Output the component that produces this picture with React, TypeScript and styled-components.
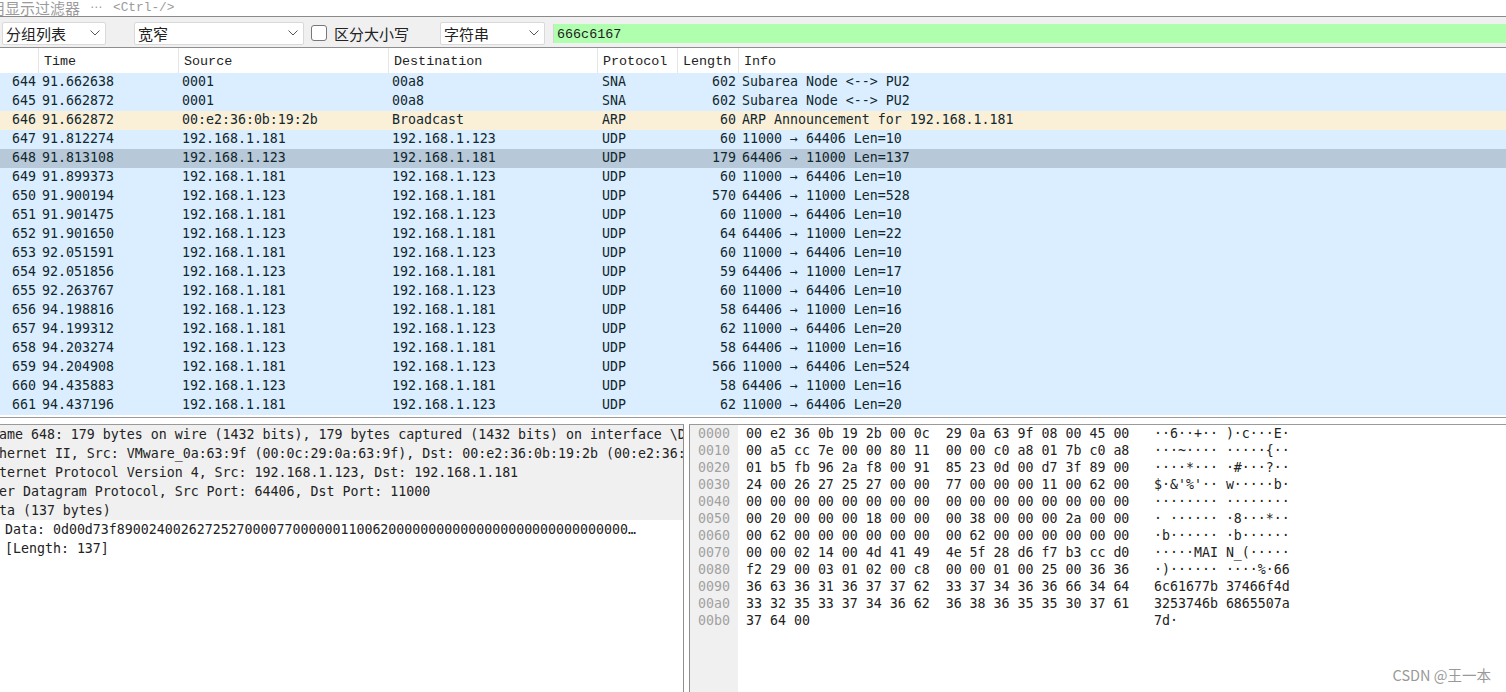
import React from "react";
import styled, { createGlobalStyle } from "styled-components";

const Global = createGlobalStyle`
  html, body { margin: 0; padding: 0; background: #fff; overflow: hidden; }
  * { box-sizing: border-box; }
`;
const CJK = `"Noto Sans CJK SC", "Noto Sans", sans-serif`;
const MONO = `"DejaVu Sans Mono", monospace`;

const Page = styled.div`
  width: 1506px; height: 692px; overflow: hidden; display: flex; flex-direction: column; background: #fff;
`;
const FilterBar = styled.div`
  height: 17px; flex: none; overflow: hidden; border-bottom: 1px solid #8a8a8a; white-space: nowrap;
  color: #9b9b9b; font: 15px/15px ${CJK};
`;
const FilterText = styled.div`
  display: flex; align-items: center; gap: 8px; margin: -1px 0 0 -25px; height: 16px;
`;
const Dots = styled.span`font: 12px "DejaVu Sans", sans-serif; margin-left: 2px;`;
const Hint = styled.span`font: 12.8px "Liberation Mono", monospace; color: #9b9b9b; margin-left: 3px;`;
const Toolbar = styled.div`
  height: 31px; flex: none; background: #f0f0f0; border-bottom: 1px solid #8e8e8e;
  display: flex; align-items: center; padding: 2px 0 0 2px;
`;
const Select = styled.div<{ $w: number; $ml: number }>`
  width: ${p => p.$w}px; margin-left: ${p => p.$ml}px; height: 23px; flex: none; background: #fff;
  border: 1px solid #d9d9d9; border-radius: 2px; display: flex; align-items: center; justify-content: space-between;
  padding: 0 5px 0 3px; font: 15px ${CJK}; color: #222;
`;
const Check = styled.span`
  width: 16px; height: 16px; margin-left: 7px; flex: none; border: 1px solid #777; border-radius: 3px; background: #fff;
`;
const CheckLabel = styled.span`margin-left: 7px; width: 94px; flex: none; font: 15px ${CJK}; color: #222;`;
const Search = styled.div`
  margin-left: 8px; flex: 1; height: 19px; background: #afffaf; display: flex; align-items: center; padding: 2px 0 0 3px;
  font: 13.4px "Liberation Mono", monospace; color: #222; border-left: 1px solid #d5d5d5;
`;
const Chevron = () => (
  <svg width="10" height="6" viewBox="0 0 10 6" fill="none" stroke="#555" strokeWidth="1"><path d="M.5.5 5 5 9.5.5" /></svg>
);
const ListHead = styled.div`
  height: 25px; flex: none; display: flex; background: #fff;
`;
const HeadCell = styled.div<{ $w: number; $last?: boolean }>`
  ${p => p.$last ? "flex: 1;" : `width: ${p.$w}px; flex: none; border-right: 1px solid #e6e6e6;`}
  padding: 1px 0 0 5px; display: flex; align-items: center;
  font: 13.4px "Liberation Mono", monospace; color: #222;
`;
const List = styled.div`flex: none; display: flex; flex-direction: column; border-bottom: 1px solid #9a9a9a; padding-bottom: 2px;`;
const Row = styled.div<{ $bg: string }>`
  height: 19px; display: flex; background: ${p => p.$bg};
  font: 13.27px/18px ${MONO}; color: #12272e; white-space: pre;
`;
const Cell = styled.span<{ $w: number; $right?: boolean; $pl?: number }>`
  width: ${p => p.$w}px; flex: none; padding-left: ${p => p.$pl ?? 0}px; overflow: hidden;
  ${p => p.$right ? "text-align: right;" : ""}
`;
const Panes = styled.div`flex: 1; min-height: 0; display: flex; padding-top: 6px; background: #fff;`;
const Tree = styled.div`
  width: 684px; flex: none; border-right: 1px solid #8f8f8f; border-top: 1px solid #9a9a9a; overflow: hidden;
  font: 13.27px/19px ${MONO}; color: #222; white-space: pre;
`;
const TreeRow = styled.div<{ $muted?: boolean }>`
  height: 19px; background: ${p => p.$muted ? "#f0f0f0" : "#fff"};
  padding-left: ${p => p.$muted ? 0 : 5}px;
  text-indent: ${p => p.$muted ? -17 : 0}px;
`;
const Splitter = styled.div`width: 5px; flex: none;`;
const Hex = styled.div`
  flex: 1; display: flex; position: relative; border-left: 1px solid #8f8f8f; border-top: 1px solid #9a9a9a; overflow: hidden;
  font: 13.27px/17px ${MONO}; color: #222; white-space: pre;
`;
const Offsets = styled.div`width: 48px; flex: none; background: #f0f0f0; color: #a0a0a0; padding-left: 8px;`;
const HexBytes = styled.div`width: 416px; flex: none; padding-left: 8px;`;
const Ascii = styled.div`flex: 1;`;
const Watermark = styled.div`
  position: absolute; right: 15px; bottom: 7px; color: #999; font: 14.5px ${CJK};
`;

const UDP = "#daeeff";
const rows: [string, string, string, string, string, string, string, string][] = [
  ["644","91.662638","0001","00a8","SNA","602","Subarea Node <--> PU2",UDP],
  ["645","91.662872","0001","00a8","SNA","602","Subarea Node <--> PU2",UDP],
  ["646","91.662872","00:e2:36:0b:19:2b","Broadcast","ARP","60","ARP Announcement for 192.168.1.181","#faf0d7"],
  ["647","91.812274","192.168.1.181","192.168.1.123","UDP","60","11000 → 64406 Len=10",UDP],
  ["648","91.813108","192.168.1.123","192.168.1.181","UDP","179","64406 → 11000 Len=137","#b7c9d8"],
  ["649","91.899373","192.168.1.181","192.168.1.123","UDP","60","11000 → 64406 Len=10",UDP],
  ["650","91.900194","192.168.1.123","192.168.1.181","UDP","570","64406 → 11000 Len=528",UDP],
  ["651","91.901475","192.168.1.181","192.168.1.123","UDP","60","11000 → 64406 Len=10",UDP],
  ["652","91.901650","192.168.1.123","192.168.1.181","UDP","64","64406 → 11000 Len=22",UDP],
  ["653","92.051591","192.168.1.181","192.168.1.123","UDP","60","11000 → 64406 Len=10",UDP],
  ["654","92.051856","192.168.1.123","192.168.1.181","UDP","59","64406 → 11000 Len=17",UDP],
  ["655","92.263767","192.168.1.181","192.168.1.123","UDP","60","11000 → 64406 Len=10",UDP],
  ["656","94.198816","192.168.1.123","192.168.1.181","UDP","58","64406 → 11000 Len=16",UDP],
  ["657","94.199312","192.168.1.181","192.168.1.123","UDP","62","11000 → 64406 Len=20",UDP],
  ["658","94.203274","192.168.1.123","192.168.1.181","UDP","58","64406 → 11000 Len=16",UDP],
  ["659","94.204908","192.168.1.181","192.168.1.123","UDP","566","11000 → 64406 Len=524",UDP],
  ["660","94.435883","192.168.1.123","192.168.1.181","UDP","58","64406 → 11000 Len=16",UDP],
  ["661","94.437196","192.168.1.181","192.168.1.123","UDP","62","11000 → 64406 Len=20",UDP],
];
const heads: [string, number][] = [["",39],["Time",140],["Source",210],["Destination",209],["Protocol",80],["Length",61],["Info",0]];
const tree: [string, boolean][] = [
  ["Frame 648: 179 bytes on wire (1432 bits), 179 bytes captured (1432 bits) on interface \\Device\\NPF", true],
  ["Ethernet II, Src: VMware_0a:63:9f (00:0c:29:0a:63:9f), Dst: 00:e2:36:0b:19:2b (00:e2:36:0b:19:2b)", true],
  ["Internet Protocol Version 4, Src: 192.168.1.123, Dst: 192.168.1.181", true],
  ["User Datagram Protocol, Src Port: 64406, Dst Port: 11000", true],
  ["Data (137 bytes)", true],
  ["Data: 0d00d73f8900240026272527000077000000110062000000000000000000000000000000…", false],
  ["[Length: 137]", false],
];
const offs = ["0000","0010","0020","0030","0040","0050","0060","0070","0080","0090","00a0","00b0"];
const hexL = [
"00 e2 36 0b 19 2b 00 0c  29 0a 63 9f 08 00 45 00","00 a5 cc 7e 00 00 80 11  00 00 c0 a8 01 7b c0 a8",
"01 b5 fb 96 2a f8 00 91  85 23 0d 00 d7 3f 89 00","24 00 26 27 25 27 00 00  77 00 00 00 11 00 62 00",
"00 00 00 00 00 00 00 00  00 00 00 00 00 00 00 00","00 20 00 00 00 18 00 00  00 38 00 00 00 2a 00 00",
"00 62 00 00 00 00 00 00  00 62 00 00 00 00 00 00","00 00 02 14 00 4d 41 49  4e 5f 28 d6 f7 b3 cc d0",
"f2 29 00 03 01 02 00 c8  00 00 01 00 25 00 36 36","36 63 36 31 36 37 37 62  33 37 34 36 36 66 34 64",
"33 32 35 33 37 34 36 62  36 38 36 35 35 30 37 61","37 64 00"];
const asc = [
"··6··+·· )·c···E·","···~···· ·····{··","····*··· ·#···?··","$·&'%'·· w·····b·",
"········ ········","· ······ ·8···*··","·b······ ·b······","·····MAI N_(·····",
"·)······ ····%·66","6c61677b 37466f4d","3253746b 6865507a","7d·"];

export default function App() {
  return (
    <Page>
      <Global />
      <FilterBar>
        <FilterText>应用显示过滤器<Dots>⋯</Dots><Hint>&lt;Ctrl-/&gt;</Hint></FilterText>
      </FilterBar>
      <Toolbar>
        <Select $w={104} $ml={0}>分组列表<Chevron /></Select>
        <Select $w={170} $ml={28}>宽窄<Chevron /></Select>
        <Check />
        <CheckLabel>区分大小写</CheckLabel>
        <Select $w={105} $ml={12}>字符串<Chevron /></Select>
        <Search>666c6167</Search>
      </Toolbar>
      <ListHead>
        {heads.map(([h, w], i) => <HeadCell key={i} $w={w} $last={w === 0}>{h}</HeadCell>)}
      </ListHead>
      <List>
        {rows.map(r => (
          <Row key={r[0]} $bg={r[7]}>
            <Cell $w={36} $right>{r[0]}</Cell>
            <Cell $w={146} $pl={6}>{r[1]}</Cell>
            <Cell $w={210}>{r[2]}</Cell>
            <Cell $w={210}>{r[3]}</Cell>
            <Cell $w={98}>{r[4]}</Cell>
            <Cell $w={36} $right>{r[5]}</Cell>
            <Cell $w={500} $pl={6}>{r[6]}</Cell>
          </Row>
        ))}
      </List>
      <Panes>
        <Tree>{tree.map(([t, m], i) => <TreeRow key={i} $muted={m}>{t}</TreeRow>)}</Tree>
        <Splitter />
        <Hex>
          <Offsets>{offs.join("\n")}</Offsets>
          <HexBytes>{hexL.join("\n")}</HexBytes>
          <Ascii>{asc.join("\n")}</Ascii>
          <Watermark>CSDN @王一本</Watermark>
        </Hex>
      </Panes>
    </Page>
  );
}
